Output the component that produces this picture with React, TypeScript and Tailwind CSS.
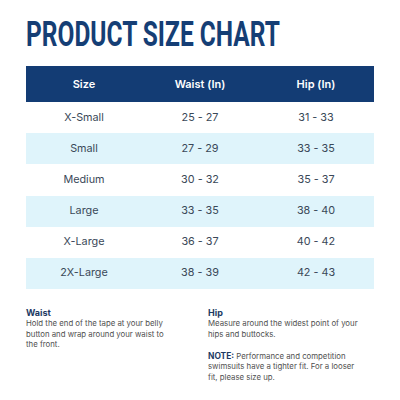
import React from 'react'

const rows = [
  { size: 'X-Small', waist: '25 - 27', hip: '31 - 33' },
  { size: 'Small', waist: '27 - 29', hip: '33 - 35' },
  { size: 'Medium', waist: '30 - 32', hip: '35 - 37' },
  { size: 'Large', waist: '33 - 35', hip: '38 - 40' },
  { size: 'X-Large', waist: '36 - 37', hip: '40 - 42' },
  { size: '2X-Large', waist: '38 - 39', hip: '42 - 43' },
]

const body = { fontFamily: 'Inter, "Open Sans", sans-serif' }

export default function App() {
  return (
    <div className="w-[400px] h-[400px] bg-white overflow-hidden px-[26px]" style={body}>
      {/* Title */}
      <div className="pt-[16px] h-[66px]">
        <h1
          className="inline-block origin-left scale-x-[0.7] text-[35px] leading-[38px] font-bold text-[#153e75] whitespace-nowrap"
          style={{ fontFamily: 'Roboto, "Liberation Sans", sans-serif' }}
        >
          PRODUCT SIZE CHART
        </h1>
      </div>

      {/* Table */}
      <div className="w-[348px]">
        <div className="grid grid-cols-3 h-[36px] items-center bg-[#133c74] text-white text-[11px] font-semibold text-center">
          <span>Size</span>
          <span>Waist (In)</span>
          <span>Hip (In)</span>
        </div>
        {rows.map((r, i) => (
          <div
            key={r.size}
            className={`grid grid-cols-3 h-[31.2px] items-center text-center text-[10.8px] text-[#3a4858] ${
              i % 2 === 1 ? 'bg-[#dff4fb]' : 'bg-white'
            }`}
          >
            <span>{r.size}</span>
            <span>{r.waist}</span>
            <span>{r.hip}</span>
          </div>
        ))}
      </div>

      {/* Notes */}
      <div className="grid grid-cols-[182px_1fr] mt-[18px] text-[7.8px] leading-[10.4px] text-[#505050] whitespace-nowrap">
        <div>
          <p className="text-[9px] font-bold text-[#1d3a63] leading-[11px]">Waist</p>
          <p>
            Hold the end of the tape at your belly
            <br />
            button and wrap around your waist to
            <br />
            the front.
          </p>
        </div>
        <div>
          <p className="text-[9px] font-bold text-[#1d3a63] leading-[11px]">Hip</p>
          <p>
            Measure around the widest point of your
            <br />
            hips and buttocks.
          </p>
          <p className="mt-[12px]">
            <span className="text-[8.4px] font-bold text-[#1d3a63]">NOTE:</span> Performance and competition
            <br />
            swimsuits have a tighter fit. For a looser
            <br />
            fit, please size up.
          </p>
        </div>
      </div>
    </div>
  )
}
